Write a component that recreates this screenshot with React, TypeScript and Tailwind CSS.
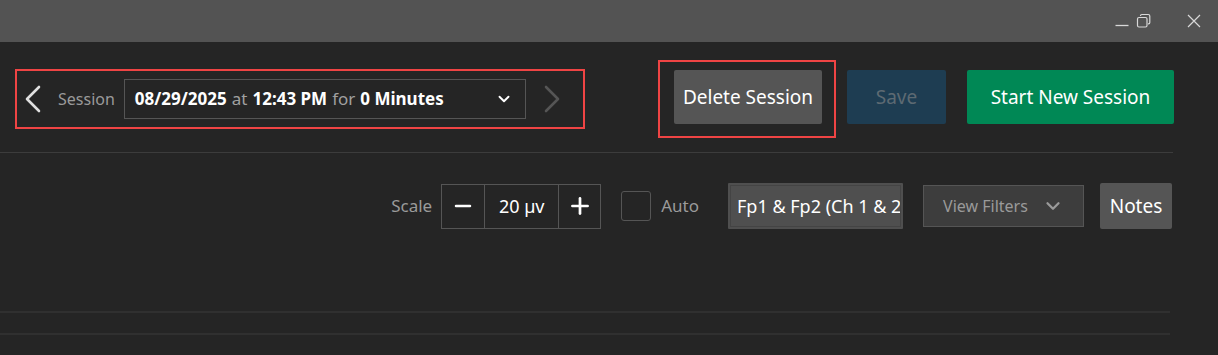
import { ChevronDown, Minus, Plus } from 'lucide-react';

const FONT = { fontFamily: '"Noto Sans", "Open Sans", sans-serif' };

function TitleBar() {
  return (
    <div className="flex h-[42px] items-center justify-end bg-[#535353] pr-[16px] text-[#d8d8d8]">
      {/* minimize */}
      <svg width="14" height="16" viewBox="0 0 14 16" className="mr-[7px]">
        <path d="M0.5 12.5h13" stroke="currentColor" strokeWidth="1.3" />
      </svg>
      {/* restore */}
      <svg width="16" height="16" viewBox="0 0 16 16" className="mr-[34px]">
        <rect x="1.5" y="4.5" width="9.5" height="9.5" rx="1.5" fill="none" stroke="currentColor" strokeWidth="1.2" />
        <path d="M4.5 3V2.8c0-.8.6-1.3 1.3-1.3h6.4c.9 0 1.6.7 1.6 1.6v6.4c0 .8-.5 1.3-1.3 1.3H12" fill="none" stroke="currentColor" strokeWidth="1.2" />
      </svg>
      {/* close */}
      <svg width="16" height="16" viewBox="0 0 16 16">
        <path d="M2 2l12 12M14 2L2 14" stroke="currentColor" strokeWidth="1.2" />
      </svg>
    </div>
  );
}

// tall thin arrow used for previous / next session
function Arrow({ dir, className }: { dir: 'left' | 'right'; className: string }) {
  return (
    <svg width="18" height="28" viewBox="0 0 18 28" className={className}>
      <path
        d={dir === 'left' ? 'M15 2L3 14l12 12' : 'M3 2l12 12L3 26'}
        fill="none"
        stroke="currentColor"
        strokeWidth="2.6"
        strokeLinecap="round"
        strokeLinejoin="round"
      />
    </svg>
  );
}

function SessionPicker() {
  return (
    <div className="mt-[27px] ml-[15px] flex h-[60px] w-[570px] items-center border-2 border-[#ef4444]">
      <Arrow dir="left" className="ml-[7px] text-[#e0e0e0]" />
      <span className="ml-[16px] text-[16px] text-[#9a9a9a]">Session</span>
      <div className="ml-[9px] flex h-[40px] w-[402px] items-center border border-[#555] pl-[10px] pr-[12px] text-[17px] text-white">
        <span className="font-bold">08/29/2025</span>
        <span className="ml-[5px] text-[#a0a0a0]">at</span>
        <span className="ml-[5px] font-bold">12:43 PM</span>
        <span className="ml-[5px] text-[#a0a0a0]">for</span>
        <span className="ml-[5px] font-bold">0 Minutes</span>
        <ChevronDown className="ml-auto h-[18px] w-[18px] text-white" strokeWidth={2.5} />
      </div>
      <Arrow dir="right" className="ml-[17px] text-[#555]" />
    </div>
  );
}

function HeaderButtons() {
  return (
    <div className="ml-auto flex items-start">
      <div className="mt-[18px] border-2 border-[#ef4444] pt-[8px] pr-[12px] pb-[12px] pl-[14px]">
        <button className="h-[54px] w-[148px] rounded-[2px] bg-[#555555] text-[19px] text-white">Delete Session</button>
      </div>
      <button className="mt-[28px] ml-[11px] h-[54px] w-[99px] rounded-[2px] bg-[#1e3d52] text-[19px] text-[#5d6a72]">Save</button>
      <button className="mt-[28px] ml-[21px] h-[54px] w-[207px] rounded-[2px] bg-[#008855] text-[19px] text-white">Start New Session</button>
    </div>
  );
}

function Toolbar() {
  return (
    <div className="mt-[30px] flex items-center justify-end pr-[2px]">
      <span className="text-[17px] text-[#9a9a9a]">Scale</span>
      <div className="ml-[9px] flex h-[45px] items-stretch border border-[#555]">
        <button className="flex w-[43px] items-center justify-center border-r border-[#555] text-white">
          <Minus className="h-[24px] w-[24px]" strokeWidth={2.5} />
        </button>
        <div className="flex w-[73px] items-center justify-center text-[18px] text-white">20 µv</div>
        <button className="flex w-[42px] items-center justify-center border-l border-[#555] text-white">
          <Plus className="h-[26px] w-[26px]" strokeWidth={2.5} />
        </button>
      </div>
      <div className="ml-[20px] h-[30px] w-[30px] rounded-[3px] border border-[#555]" />
      <span className="ml-[10px] text-[17px] text-[#9a9a9a]">Auto</span>
      <div className="ml-[29px] flex h-[46px] w-[175px] items-center overflow-hidden rounded-[1px] bg-[#4f4f4f] p-[2px]">
        <div className="flex h-full w-full items-center overflow-hidden whitespace-nowrap border border-[#444] pl-[6px] text-[18px] text-white">
          Fp1 &amp; Fp2 (Ch 1 &amp; 2)
        </div>
      </div>
      <button className="ml-[20px] flex h-[42px] w-[161px] items-center justify-center gap-[14px] border border-[#555] bg-[#3d3d3d] text-[16px] text-[#9a9a9a]">
        View Filters
        <ChevronDown className="h-[22px] w-[22px]" strokeWidth={2.5} />
      </button>
      <button className="ml-[16px] h-[46px] w-[72px] rounded-[2px] bg-[#555555] text-[19px] text-white">Notes</button>
    </div>
  );
}

export default function App() {
  return (
    <div className="h-[355px] w-[1218px] overflow-hidden bg-[#252525]" style={FONT}>
      <TitleBar />
      <div className="w-[1174px]">
        <div className="flex items-start">
          <SessionPicker />
          <HeaderButtons />
        </div>
        <div className="mt-[14px] h-px w-[1173px] bg-[#3c3c3c]" />
        <Toolbar />
        <div className="mt-[82px] h-[2px] w-[1170px] bg-[#303030]" />
        <div className="mt-[20px] h-[2px] w-[1170px] bg-[#303030]" />
      </div>
    </div>
  );
}
